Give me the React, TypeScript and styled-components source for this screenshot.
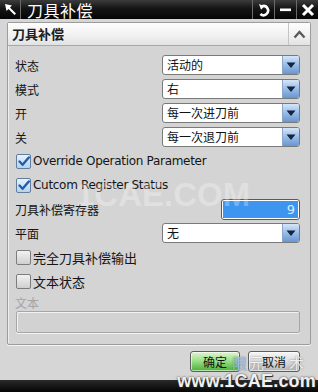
import React from "react";
import styled, { createGlobalStyle } from "styled-components";

const Global = createGlobalStyle`
  html, body { margin: 0; padding: 0; background: #d4d4d4; }
  body { font-family: "Liberation Sans", "Noto Sans CJK SC", sans-serif; }
`;

const CJK = `"Noto Sans CJK SC", "Liberation Sans", sans-serif`;

const Window = styled.div`
  position: relative;
  width: 318px;
  height: 392px;
  background: #d6d6d6;
  display: flex;
  flex-direction: column;
  overflow: hidden;
`;

const TitleBar = styled.div`
  height: 19px;
  background: linear-gradient(#3c3c3c, #141414 45%, #050505);
  display: flex;
  align-items: stretch;
  color: #fff;
  flex-shrink: 0;
`;

const TitleIconBox = styled.div`
  width: 20px;
  display: flex;
  align-items: center;
  justify-content: center;
  border-right: 1px solid #6a6a6a;
`;

const TitleText = styled.div`
  font-family: ${CJK};
  font-size: 16px;
  line-height: 16px;
  align-self: center;
  padding-left: 6px;
  flex: 1;
  letter-spacing: 0.5px;
`;

const TitleButton = styled.div`
  width: 21px;
  border-left: 1px solid #6a6a6a;
  display: flex;
  align-items: center;
  justify-content: center;
`;

const Content = styled.div`
  padding: 3px 7px 0 7px;
`;

const Group = styled.div`
  border: 1px solid #9c9c9c;
  border-radius: 2px;
  box-shadow: 0 1px 0 #f4f4f4, inset 1px 1px 0 #eeeeee;
  background: #d4d4d4;
`;

const GroupHeader = styled.div`
  height: 22px;
  display: flex;
  align-items: stretch;
  background: linear-gradient(#fdfdfd, #f0f0f0 60%, #e2e2e2);
  border-bottom: 1px solid #a8a8a8;
`;

const GroupTitle = styled.div`
  flex: 1;
  font-family: ${CJK};
  font-weight: bold;
  font-size: 13px;
  line-height: 22px;
  padding-left: 4px;
  color: #202020;
`;

const Collapse = styled.div`
  width: 21px;
  border-left: 1px solid #c4c4c4;
  display: flex;
  align-items: center;
  justify-content: center;
`;

const GroupBody = styled.div`
  padding: 7px 10px 11px 7px;
  display: flex;
  flex-direction: column;
`;

const Row = styled.div`
  height: 24px;
  display: flex;
  align-items: center;
  justify-content: space-between;
`;

const Label = styled.span<{ $disabled?: boolean }>`
  font-family: ${CJK};
  font-size: 12px;
  color: ${(p) => (p.$disabled ? "#a4a4a4" : "#151515")};
`;

const SelectBox = styled.div`
  width: 138px;
  height: 20px;
  box-sizing: border-box;
  border: 1px solid #7a7a7a;
  border-radius: 3px;
  background: #fff;
  display: flex;
  align-items: stretch;
  overflow: hidden;
`;

const SelectText = styled.span`
  flex: 1;
  font-family: ${CJK};
  font-size: 12px;
  line-height: 18px;
  padding-left: 4px;
  color: #111;
`;

const ArrowButton = styled.div`
  width: 16px;
  background: linear-gradient(#d6e6f8, #9cc0e8 45%, #6896d0);
  border-left: 1px solid #8aa6c8;
  display: flex;
  align-items: center;
  justify-content: center;
`;

const CheckRow = styled.label`
  height: 24px;
  display: flex;
  align-items: center;
  padding-left: 1px;
  gap: 2px;
`;

const Box = styled.span<{ $checked: boolean }>`
  width: 15px;
  height: 15px;
  box-sizing: border-box;
  border: 1px solid ${(p) => (p.$checked ? "#5d7e9e" : "#7c7c7c")};
  border-radius: 2px;
  background: ${(p) =>
    p.$checked
      ? "linear-gradient(#e8f2fc, #b8d2ec)"
      : "linear-gradient(#f2f2f2, #cfcfcf)"};
  display: flex;
  align-items: center;
  justify-content: center;
`;

const CheckText = styled.span<{ $latin?: boolean }>`
  font-family: ${(p) => (p.$latin ? `"DejaVu Sans", sans-serif` : CJK)};
  font-size: ${(p) => (p.$latin ? "12px" : "13px")};
  color: #151515;
  letter-spacing: ${(p) => (p.$latin ? "-0.3px" : "0")};
`;

const NumberField = styled.div`
  width: 79px;
  height: 21px;
  box-sizing: border-box;
  border: 1px solid #5a5a5a;
  border-radius: 3px;
  padding: 1px;
  background: #fff;
`;

const NumberInner = styled.div`
  height: 100%;
  background: #3d95f0;
  color: #d8ecff;
  font-family: "DejaVu Sans", sans-serif;
  font-size: 13px;
  line-height: 17px;
  text-align: right;
  padding-right: 3px;
`;

const TextLabelRow = styled.div`
  height: 18px;
  display: flex;
  align-items: center;
`;

const TextArea = styled.div`
  margin-left: 1px;
  height: 22px;
  box-sizing: border-box;
  border: 1px solid #a6a6a6;
  border-radius: 2px;
  box-shadow: inset 1px 1px 0 #f2f2f2, 0 1px 0 #f2f2f2;
  background: #d2d2d2;
`;

const Footer = styled.div`
  display: flex;
  justify-content: flex-end;
  gap: 8px;
  padding: 6px 18px 0 0;
  height: 27px;
`;

const Button = styled.div<{ $primary?: boolean }>`
  width: ${(p) => (p.$primary ? "50px" : "52px")};
  height: 21px;
  box-sizing: border-box;
  border: 1px solid #5e5e5e;
  border-radius: 3px;
  background: ${(p) =>
    p.$primary
      ? "linear-gradient(#dff5d0, #9ee08a 45%, #48b038)"
      : "linear-gradient(#f6f6f6, #dcdcdc 50%, #b4b4b4)"};
  box-shadow: inset 0 0 0 1px rgba(255, 255, 255, 0.6);
  font-family: ${CJK};
  font-size: 12px;
  line-height: 19px;
  text-align: center;
  color: #111;
`;

const BottomBar = styled.div`
  margin-top: auto;
  height: 12px;
  background: linear-gradient(#2a2a2a, #050505);
`;

const WatermarkBig = styled.div`
  position: absolute;
  left: 76px;
  top: 176px;
  font-family: "Liberation Sans", sans-serif;
  font-weight: bold;
  font-size: 33px;
  color: rgba(255, 255, 255, 0.28);
  pointer-events: none;
`;

const WatermarkSite = styled.div`
  position: absolute;
  right: 2px;
  bottom: 0px;
  font-family: "Liberation Sans", sans-serif;
  font-weight: bold;
  font-size: 18px;
  color: #f0f0f0;
  text-shadow: 0 0 2px #333, 1px 1px 1px #222;
  pointer-events: none;
  letter-spacing: 0.2px;
`;

const WatermarkChar = styled.span<{ $x: number; $color: string }>`
  position: absolute;
  left: ${(p) => p.$x}px;
  top: 352px;
  font-family: ${CJK};
  font-size: 15px;
  color: ${(p) => p.$color};
  text-shadow: 0 0 2px rgba(80, 80, 80, 0.7);
  pointer-events: none;
`;

const Arrow = () => (
  <svg width="10" height="7" viewBox="0 0 10 7">
    <path d="M0.5 0.5 H9.5 L5 6 Z" fill="#15233f" />
  </svg>
);

const Select = ({ value }: { value: string }) => (
  <SelectBox>
    <SelectText>{value}</SelectText>
    <ArrowButton>
      <Arrow />
    </ArrowButton>
  </SelectBox>
);

const Check = ({ checked, children, latin }: { checked: boolean; children: React.ReactNode; latin?: boolean }) => (
  <CheckRow>
    <Box $checked={checked}>
      {checked && (
        <svg width="12" height="11" viewBox="0 0 12 11">
          <path d="M1.5 5.5 L4.6 8.8 L10.8 1.5" fill="none" stroke="#1d5fb0" strokeWidth="2.4" strokeLinecap="round" strokeLinejoin="round" />
        </svg>
      )}
    </Box>
    <CheckText $latin={latin}>{children}</CheckText>
  </CheckRow>
);

export default function App() {
  return (
    <>
      <Global />
      <Window>
        <TitleBar>
          <TitleIconBox>
            <svg width="13" height="13" viewBox="0 0 13 13">
              <path d="M1 1 L8 2.5 L6 4.5 L12 10.5 L10.5 12 L4.5 6 L2.5 8 Z" fill="#fff" />
            </svg>
          </TitleIconBox>
          <TitleText>刀具补偿</TitleText>
          <TitleButton>
            <svg width="14" height="14" viewBox="0 0 14 14">
              <path d="M5 3.2 A4.6 4.6 0 1 1 3.4 11" fill="none" stroke="#fff" strokeWidth="2.6" />
              <path d="M2 1 L7.5 3.2 L4 6.8 Z" fill="#fff" />
            </svg>
          </TitleButton>
          <TitleButton>
            <svg width="13" height="13" viewBox="0 0 13 13">
              <rect x="1" y="5.5" width="11" height="2.6" fill="#fff" />
            </svg>
          </TitleButton>
          <TitleButton>
            <svg width="14" height="14" viewBox="0 0 14 14">
              <path d="M2 2 L12 12 M12 2 L2 12" stroke="#fff" strokeWidth="3" />
            </svg>
          </TitleButton>
        </TitleBar>
        <Content>
          <Group>
            <GroupHeader>
              <GroupTitle>刀具补偿</GroupTitle>
              <Collapse>
                <svg width="13" height="9" viewBox="0 0 13 9">
                  <path d="M1.5 7.5 L6.5 2 L11.5 7.5" fill="none" stroke="#5a5a5a" strokeWidth="2.4" />
                </svg>
              </Collapse>
            </GroupHeader>
            <GroupBody>
              <Row>
                <Label>状态</Label>
                <Select value="活动的" />
              </Row>
              <Row>
                <Label>模式</Label>
                <Select value="右" />
              </Row>
              <Row>
                <Label>开</Label>
                <Select value="每一次进刀前" />
              </Row>
              <Row>
                <Label>关</Label>
                <Select value="每一次退刀前" />
              </Row>
              <Check checked latin>Override Operation Parameter</Check>
              <Check checked latin>Cutcom Register Status</Check>
              <Row>
                <Label>刀具补偿寄存器</Label>
                <NumberField>
                  <NumberInner>9</NumberInner>
                </NumberField>
              </Row>
              <Row>
                <Label>平面</Label>
                <Select value="无" />
              </Row>
              <Check checked={false}>完全刀具补偿输出</Check>
              <Check checked={false}>文本状态</Check>
              <TextLabelRow>
                <Label $disabled>文本</Label>
              </TextLabelRow>
              <TextArea />
            </GroupBody>
          </Group>
        </Content>
        <Footer>
          <Button $primary>确定</Button>
          <Button>取消</Button>
        </Footer>
        <BottomBar />
        <WatermarkBig>1CAE.COM</WatermarkBig>
        <WatermarkChar $x={232} $color="rgba(150,200,255,0.85)">限</WatermarkChar>
        <WatermarkChar $x={249} $color="rgba(255,255,255,0.85)">元</WatermarkChar>
        <WatermarkChar $x={289} $color="rgba(255,255,255,0.85)">术</WatermarkChar>
        <WatermarkSite>www.1CAE.com</WatermarkSite>
      </Window>
    </>
  );
}
